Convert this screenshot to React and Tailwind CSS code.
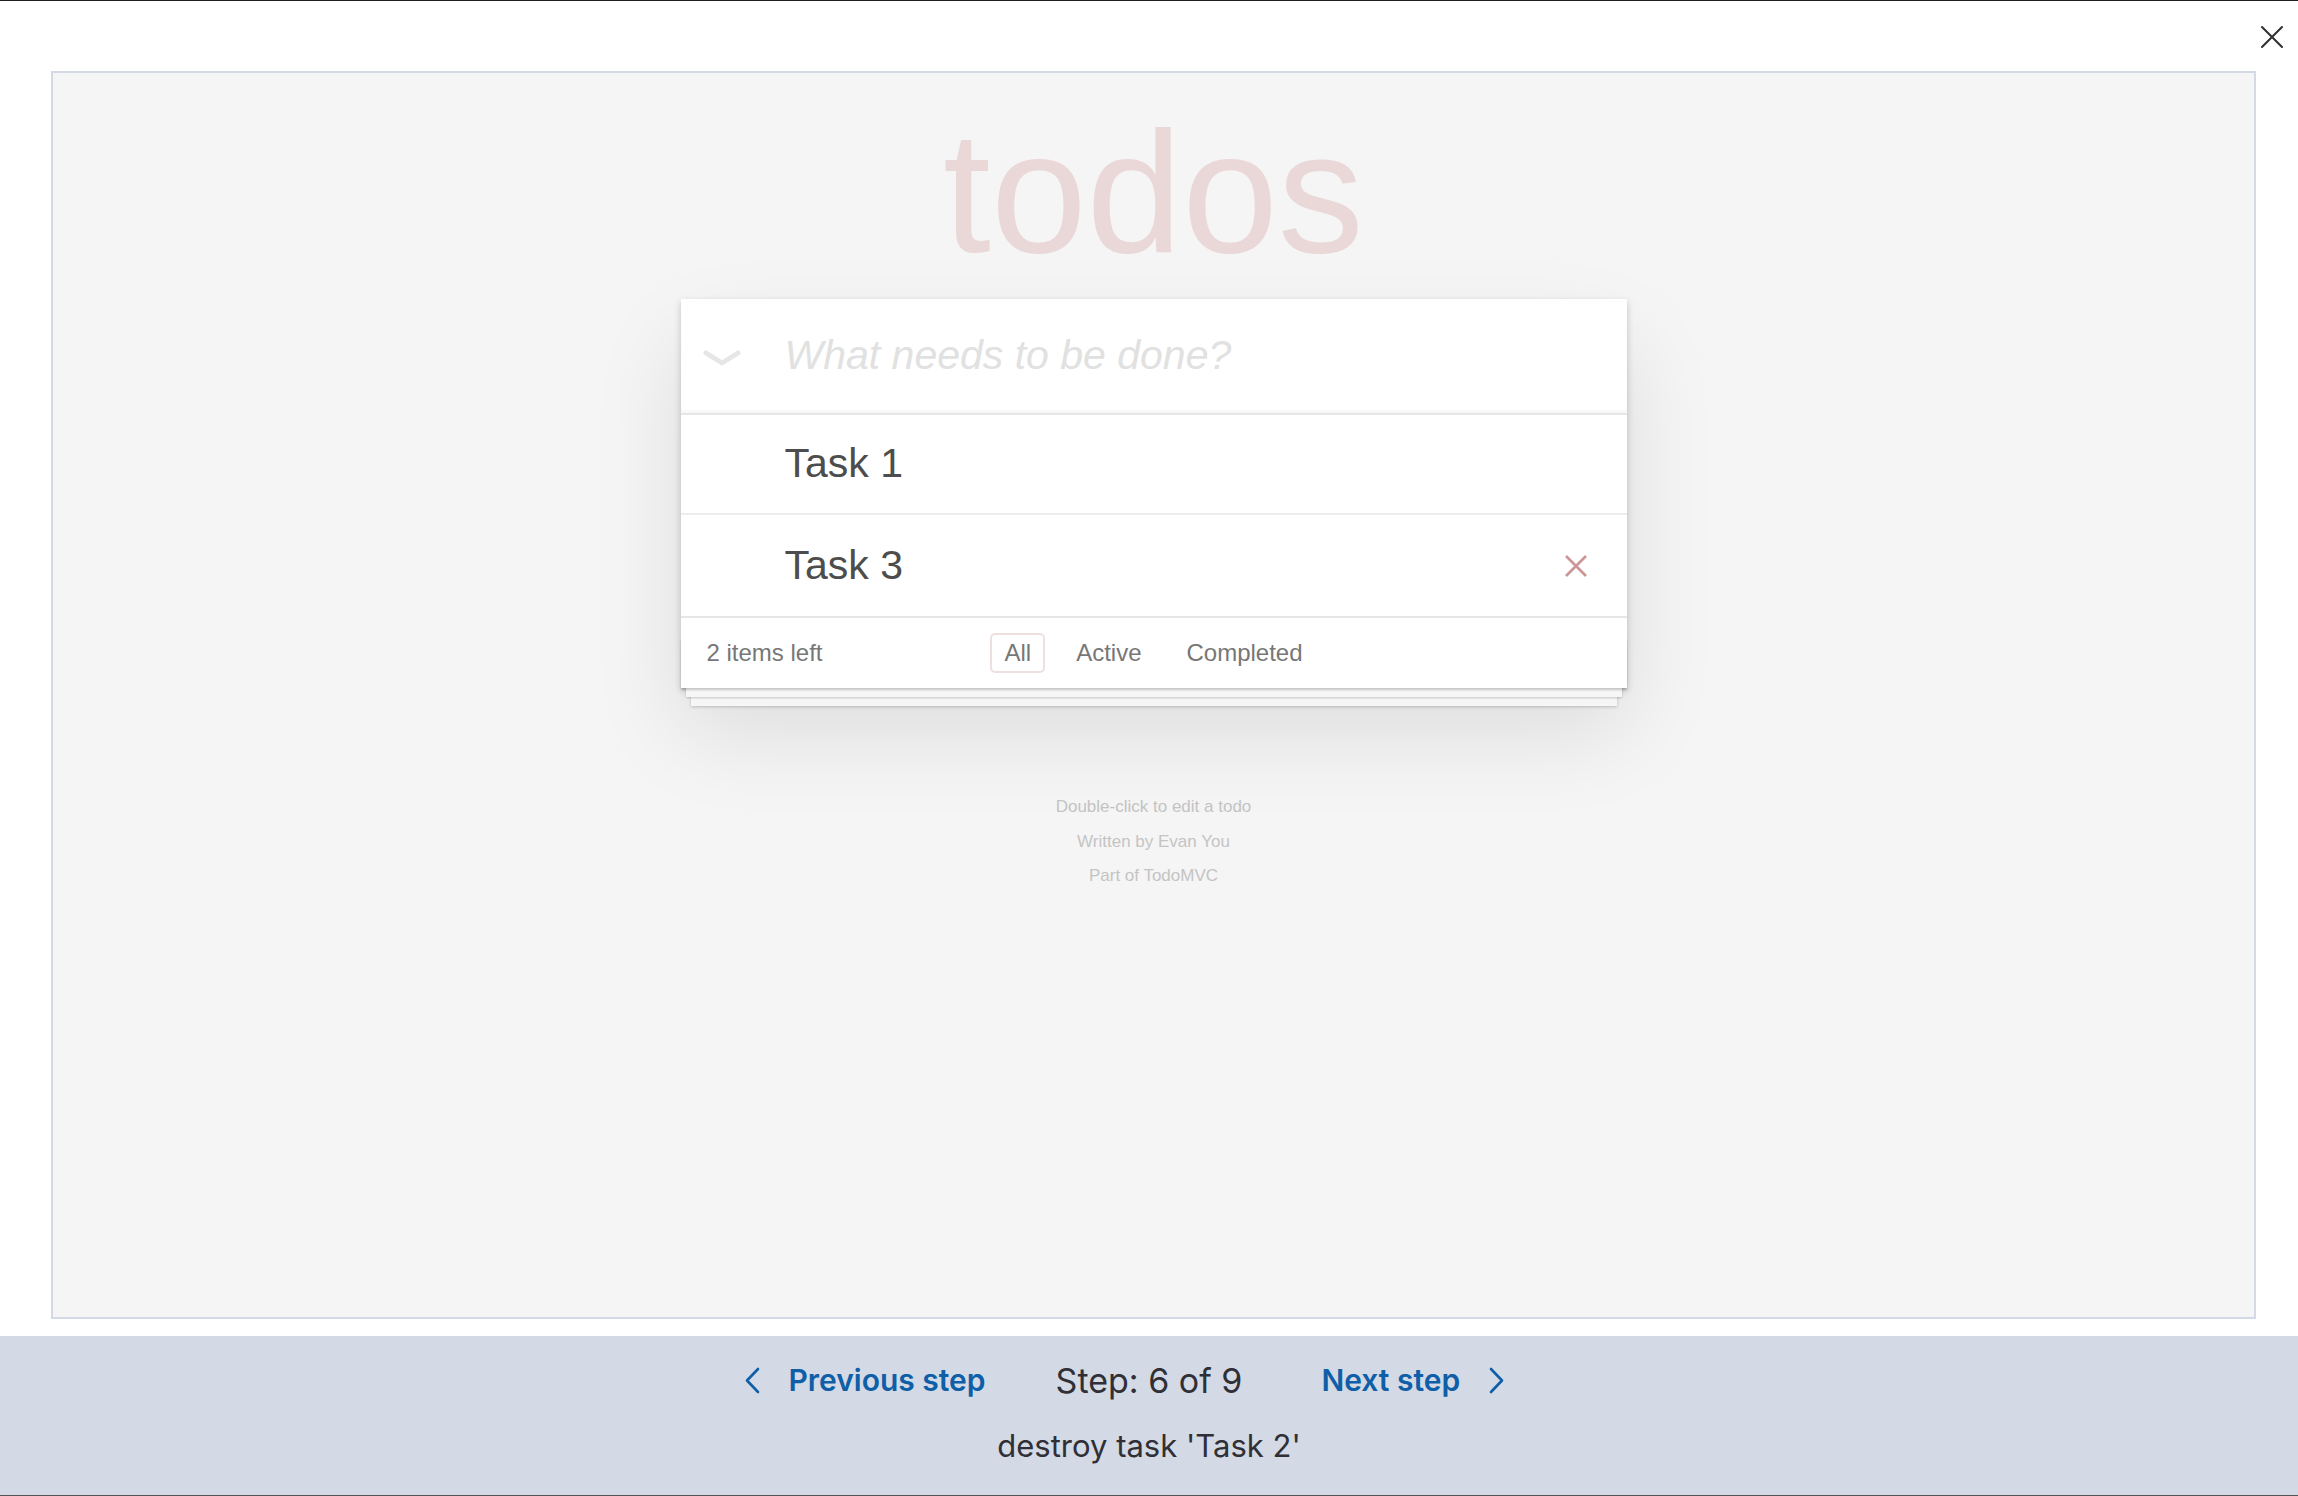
import React from "react";

function CloseIcon() {
  return (
    <svg width="24" height="24" viewBox="0 0 24 24" fill="none">
      <path d="M2 2L22 22M22 2L2 22" stroke="#2e2e33" strokeWidth="2" strokeLinecap="round" />
    </svg>
  );
}

function Chevron({ dir }) {
  return (
    <svg width="16" height="27" viewBox="0 0 16 27" fill="none">
      {dir === "left" ? (
        <path d="M14 2L3 13.5L14 25" stroke="#0f5ea8" strokeWidth="2.6" strokeLinecap="round" strokeLinejoin="round" />
      ) : (
        <path d="M2 2L13 13.5L2 25" stroke="#0f5ea8" strokeWidth="2.6" strokeLinecap="round" strokeLinejoin="round" />
      )}
    </svg>
  );
}

function TodoRow({ text, last, showDestroy }) {
  return (
    <div
      className={`flex items-center ${
        last ? "h-[101px]" : "h-[100px] border-b-2 border-[#ededed]"
      }`}
    >
      <span className="pl-[104px] text-[41px] text-[#4d4d4d]">{text}</span>
      {showDestroy && (
        <svg className="ml-auto mr-[39px]" width="24" height="24" viewBox="0 0 24 24" fill="none">
          <path d="M2 2L22 22M22 2L2 22" stroke="#c99595" strokeWidth="2.6" />
        </svg>
      )}
    </div>
  );
}

function TodoApp() {
  return (
    <div className="flex flex-col items-center font-['Liberation_Sans',Arial,sans-serif]">
      <h1 className="mt-[33px] text-[172px] leading-none text-[#ead7d7]">todos</h1>

      <div className="relative mt-[21px] w-[946px] bg-white shadow-[0_3px_7px_rgba(0,0,0,0.2),0_43px_86px_rgba(0,0,0,0.1)]">
        <div className="relative flex h-[114px] items-center shadow-[inset_0_-3px_2px_rgba(0,0,0,0.03)]">
          <svg className="absolute left-[22px] top-[50px]" width="38" height="18" viewBox="0 0 38 18" fill="none">
            <path d="M3 4L19 14L35 4" stroke="#e6e6e6" strokeWidth="5" strokeLinecap="round" strokeLinejoin="round" />
          </svg>
          <span className="pl-[104px] text-[41px] italic font-light text-[#e1e1e1]">
            What needs to be done?
          </span>
        </div>

        <div className="border-t-2 border-[#e6e6e6]">
          <TodoRow text="Task 1" />
          <TodoRow text="Task 3" last showDestroy />
        </div>

        <div className="relative grid h-[72px] grid-cols-[1fr_auto_1fr] items-center border-t-2 border-[#e6e6e6] px-[26px] text-[24px] text-[#777]">
          <div className="absolute inset-x-0 bottom-0 h-[50px] shadow-[0_2px_2px_rgba(0,0,0,0.2),0_14px_0_-5px_#f6f6f6,0_15px_2px_-5px_rgba(0,0,0,0.2),0_28px_0_-10px_#f6f6f6,0_29px_3px_-10px_rgba(0,0,0,0.2)]" />
          <span className="relative">2 items left</span>
          <div className="relative flex items-center gap-[17px]">
            <span className="flex h-[40px] items-center rounded-[5px] border-2 border-[#efe0e0] px-[12px]">All</span>
            <span className="flex h-[40px] items-center border-2 border-transparent px-[12px]">Active</span>
            <span className="flex h-[40px] items-center border-2 border-transparent px-[12px]">Completed</span>
          </div>
          <span />
        </div>
      </div>

      <div className="mt-[102px] text-center text-[17px] leading-[34.5px] text-[#c4c4c4]">
        <p>Double-click to edit a todo</p>
        <p>Written by Evan You</p>
        <p>Part of TodoMVC</p>
      </div>
    </div>
  );
}

export default function App() {
  return (
    <div className="flex h-[1496px] w-[2298px] flex-col border-t border-[#1f1f1f] bg-white font-['Inter',sans-serif]">
      <div className="flex h-[70px] items-start justify-end pr-[14px] pt-[24px]">
        <CloseIcon />
      </div>

      <div className="ml-[51px] mr-[42px] h-[1248px] border-2 border-[#d3d9e5] bg-[#f5f5f5]">
        <TodoApp />
      </div>

      <div className="mt-[17px] flex h-[160px] flex-col items-center border-b border-[#555] bg-[#d3d9e5]">
        <div className="mt-[19px] grid h-[40px] w-full grid-cols-[1fr_auto_1fr] items-center gap-[70px]">
          <div className="flex items-center justify-end gap-[28px] text-[30px] font-semibold text-[#0f5ea8]">
            <Chevron dir="left" />
            <span>Previous step</span>
          </div>
          <span className="text-[34px] text-[#2f2f35]">Step: 6 of 9</span>
          <div className="flex items-center gap-[29px] pl-[9px] text-[30px] font-semibold text-[#0f5ea8]">
            <span>Next step</span>
            <Chevron dir="right" />
          </div>
        </div>
        <div className="mt-[31px] flex h-[40px] items-center text-[31px] text-[#2f2f35]">
          destroy task 'Task 2'
        </div>
      </div>
    </div>
  );
}
